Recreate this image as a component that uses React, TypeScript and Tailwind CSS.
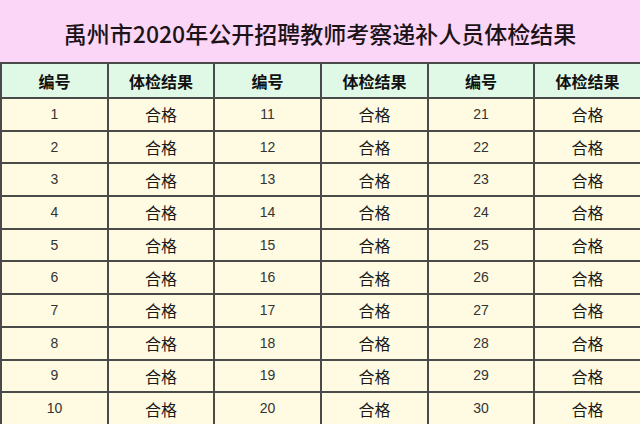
import React from "react";

const rows = Array.from({ length: 10 }, (_, i) => [i + 1, i + 11, i + 21]);

const cjk = { fontFamily: '"Noto Sans CJK SC", "Noto Sans", sans-serif' };
const num = { fontFamily: '"Liberation Sans", "Noto Sans CJK SC", sans-serif' };

export default function App() {
  return (
    <div className="w-[640px] h-[424px] overflow-hidden bg-[#fffbe2]" style={cjk}>
      <div className="h-[62px] bg-[#fcd6f6] flex items-center justify-center pt-[4px]">
        <h1 className="text-[23px] font-medium text-[#1c1418] leading-none">
          禹州市2020年公开招聘教师考察递补人员体检结果
        </h1>
      </div>
      <div className="grid grid-cols-[107px_106px_107px_107px_106px_107px] grid-rows-[35px_repeat(10,32.7px)] border-t-2 border-l-2 border-[#4a4a4a]">
        {["编号", "体检结果", "编号", "体检结果", "编号", "体检结果"].map((h, i) => (
          <div
            key={i}
            className="bg-[#e0f9e6] border-r-2 border-b-2 border-[#4a4a4a] flex items-center justify-center text-[16px] font-bold text-[#111]"
          >
            {h}
          </div>
        ))}
        {rows.map((r) =>
          r.map((n) => (
            <React.Fragment key={n}>
              <div
                className="border-r-2 border-b-2 border-[#4a4a4a] flex items-center justify-center text-[14px] text-[#333]"
                style={num}
              >
                {n}
              </div>
              <div className="border-r-2 border-b-2 border-[#4a4a4a] flex items-center justify-center text-[16px] text-[#1a1a1a]">
                合格
              </div>
            </React.Fragment>
          ))
        )}
      </div>
    </div>
  );
}
